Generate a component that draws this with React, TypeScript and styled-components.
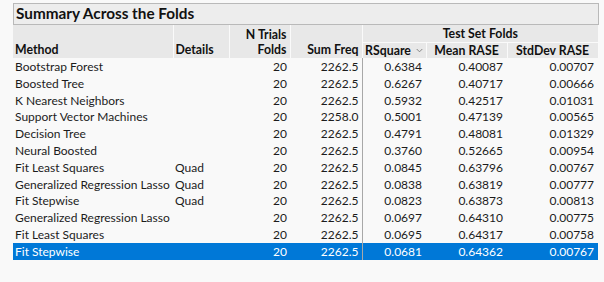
import styled, { createGlobalStyle } from 'styled-components';

const GlobalStyle = createGlobalStyle`
  html, body {
    margin: 0;
    padding: 0;
    background: #f9f9f9;
  }
  body {
    font-family: Lato, "Noto Sans", "DejaVu Sans", sans-serif;
    color: #1c1c1c;
  }
`;

type Row = {
  method: string;
  details?: string;
  folds: number;
  freq: string;
  rsq: string;
  mean: string;
  sd: string;
};

const rows: Row[] = [
  { method: 'Bootstrap Forest', folds: 20, freq: '2262.5', rsq: '0.6384', mean: '0.40087', sd: '0.00707' },
  { method: 'Boosted Tree', folds: 20, freq: '2262.5', rsq: '0.6267', mean: '0.40717', sd: '0.00666' },
  { method: 'K Nearest Neighbors', folds: 20, freq: '2262.5', rsq: '0.5932', mean: '0.42517', sd: '0.01031' },
  { method: 'Support Vector Machines', folds: 20, freq: '2258.0', rsq: '0.5001', mean: '0.47139', sd: '0.00565' },
  { method: 'Decision Tree', folds: 20, freq: '2262.5', rsq: '0.4791', mean: '0.48081', sd: '0.01329' },
  { method: 'Neural Boosted', folds: 20, freq: '2262.5', rsq: '0.3760', mean: '0.52665', sd: '0.00954' },
  { method: 'Fit Least Squares', details: 'Quad', folds: 20, freq: '2262.5', rsq: '0.0845', mean: '0.63796', sd: '0.00767' },
  { method: 'Generalized Regression Lasso', details: 'Quad', folds: 20, freq: '2262.5', rsq: '0.0838', mean: '0.63819', sd: '0.00777' },
  { method: 'Fit Stepwise', details: 'Quad', folds: 20, freq: '2262.5', rsq: '0.0823', mean: '0.63873', sd: '0.00813' },
  { method: 'Generalized Regression Lasso', folds: 20, freq: '2262.5', rsq: '0.0697', mean: '0.64310', sd: '0.00775' },
  { method: 'Fit Least Squares', folds: 20, freq: '2262.5', rsq: '0.0695', mean: '0.64317', sd: '0.00758' },
  { method: 'Fit Stepwise', folds: 20, freq: '2262.5', rsq: '0.0681', mean: '0.64362', sd: '0.00767' },
];

const App = () => {
  return (
    <Page>
      <GlobalStyle />
      <Report>
        <TitleBar>Summary Across the Folds</TitleBar>
        <Table>
          <colgroup>
            <col style={{ width: 160 }} />
            <col style={{ width: 56 }} />
            <col style={{ width: 61 }} />
            <col style={{ width: 72 }} />
            <col style={{ width: 64 }} />
            <col style={{ width: 81 }} />
            <col style={{ width: 91 }} />
          </colgroup>
          <thead>
            <tr>
              <Th rowSpan={2} $align="left">Method</Th>
              <Th rowSpan={2} $align="left">Details</Th>
              <Th rowSpan={2} $align="right">N Trials<br />Folds</Th>
              <Th rowSpan={2} $align="right">Sum Freq</Th>
              <GroupTh colSpan={3}>Test Set Folds</GroupTh>
            </tr>
            <tr>
              <SubTh>
                RSquare <SortMark viewBox="0 0 8 5"><path d="M0.8 0.8 L4 4 L7.2 0.8" /></SortMark>
              </SubTh>
              <SubTh>Mean RASE</SubTh>
              <SubTh>StdDev RASE</SubTh>
            </tr>
          </thead>
          <tbody>
            {rows.map((r, i) => (
              <Tr key={i} $selected={i === rows.length - 1}>
                <Td>{r.method}</Td>
                <Td>{r.details ?? ''}</Td>
                <Td $num>{r.folds}</Td>
                <Td $num $divider>{r.freq}</Td>
                <Td $num $pad={4}>{r.rsq}</Td>
                <Td $num $pad={4}>{r.mean}</Td>
                <Td $num $pad={4}>{r.sd}</Td>
              </Tr>
            ))}
          </tbody>
        </Table>
      </Report>
    </Page>
  );
};
export default App;

const Page = styled.div`
  padding: 3px 6px 0 13px;
`;

const Report = styled.div`
  width: 586px;
`;

const TitleBar = styled.div`
  box-sizing: border-box;
  height: 22px;
  border: 1px solid #b9b9b9;
  background: #ededed;
  font-weight: 700;
  font-size: 15.3px;
  line-height: 19px;
  padding-left: 2px;
  color: #111;
`;

const Table = styled.table`
  width: 585px;
  table-layout: fixed;
  border-collapse: collapse;
  font-size: 12px;
`;

const Th = styled.th<{ $align: 'left' | 'right' }>`
  background: #e8e8e8;
  border-right: 1px solid #fafafa;
  text-align: ${(p) => p.$align};
  vertical-align: bottom;
  font-weight: 700;
  font-size: 12.3px;
  line-height: 15px;
  padding: 1px 3px 1px 2px;
  color: #111;
  white-space: nowrap;
`;

const GroupTh = styled.th`
  background: #e8e8e8;
  border-bottom: 1px solid #fafafa;
  height: 16px;
  padding: 0;
  font-weight: 700;
  font-size: 12.3px;
  line-height: 17px;
  text-align: center;
  color: #111;
`;

const SubTh = styled.th`
  background: #e8e8e8;
  border-right: 1px solid #fafafa;
  height: 15px;
  padding: 0;
  font-weight: 700;
  font-size: 12.3px;
  line-height: 15px;
  text-align: center;
  color: #111;
  white-space: nowrap;
`;

const SortMark = styled.svg`
  width: 7px;
  height: 5px;
  margin-left: 2px;
  vertical-align: 2px;
  fill: none;
  stroke: #777;
  stroke-width: 1;
`;

const Tr = styled.tr<{ $selected?: boolean }>`
  height: 16.8px;
  background: ${(p) => (p.$selected ? '#0078d7' : 'transparent')};
  color: ${(p) => (p.$selected ? '#fff' : '#1c1c1c')};
`;

const Td = styled.td<{ $num?: boolean; $divider?: boolean; $pad?: number }>`
  padding: 1px ${(p) => (p.$pad ?? 3)}px 0 2px;
  line-height: 15.8px;
  text-align: ${(p) => (p.$num ? 'right' : 'left')};
  white-space: nowrap;
  overflow: hidden;
  border-right: ${(p) => (p.$divider ? '1px solid #a8a8a8' : 'none')};
`;
